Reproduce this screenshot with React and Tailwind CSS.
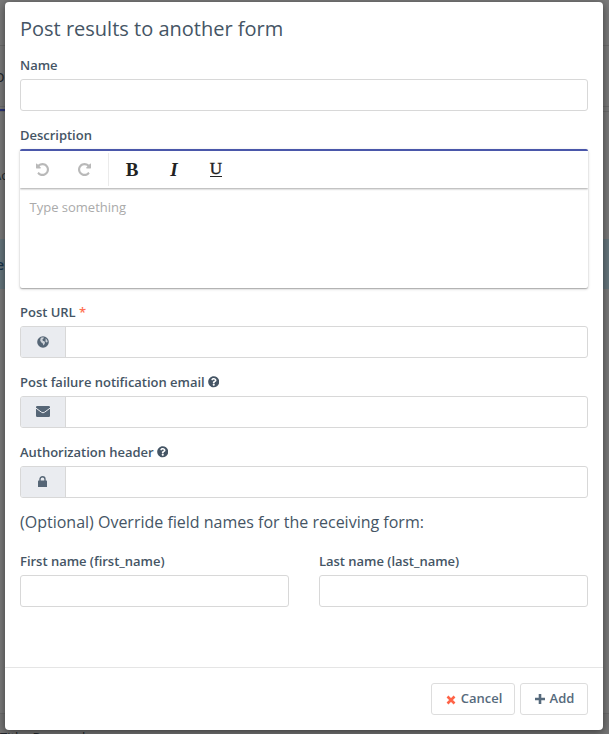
import React from "react";
import { FaQuestionCircle } from "react-icons/fa";

const UNDO =
  "M1536 896q0 156-61 298t-164 245-245 164-298 61q-172 0-327-72.5t-264-204.5q-7-10-6.5-22.5t8.5-20.5l137-138q10-9 25-9 16 2 23 12 73 95 179 147t225 52q104 0 198.5-40.5t163.5-109.5 109.5-163.5 40.5-198.5-40.5-198.5-109.5-163.5-163.5-109.5-198.5-40.5q-98 0-188 35.5t-160 101.5l137 138q31 30 14 69-17 40-59 40h-448q-26 0-45-19t-19-45v-448q0-42 40-59 39-17 69 14l130 129q107-101 244.5-156.5t284.5-55.5q156 0 298 61t245 164 164 245 61 298z";

function Undo({ className = "" }) {
  return (
    <svg viewBox="0 128 1536 1536" className={"size-[13px] " + className} fill="currentColor">
      <path d={UNDO} />
    </svg>
  );
}

function Globe() {
  return (
    <svg viewBox="0 0 12 12" className="mr-px mb-px size-[12px]">
      <circle cx="6" cy="6" r="5.8" fill="currentColor" />
      <path d="M4.4 1.6 6.8 1.3 6.4 2.8 5.2 3.8 6.2 5 7.4 5.2 8 6.4 7.6 8 6.4 9.4 5.8 7.6 4.4 6.4 3.2 4.8 3.4 2.8Z" fill="#eaecf0" opacity="0.8" />
      <path d="M8.6 2.2 10.2 4 10.7 6 9.6 6.6 8.4 5.4 8.6 4Z" fill="#eaecf0" opacity="0.8" />
    </svg>
  );
}

function Mail() {
  return (
    <svg viewBox="0 0 14 11" className="mr-px mb-px h-[11px] w-[14px]">
      <rect width="14" height="11" rx="1.2" fill="currentColor" />
      <path d="M0 2.2 5.6 6.3Q7 7.3 8.4 6.3L14 2.2" fill="none" stroke="#eaecf0" strokeWidth="1" />
    </svg>
  );
}

function Lock() {
  return (
    <svg viewBox="0 0 9 11" className="mr-px mb-[2px] h-[11px] w-[9px]">
      <rect y="4.6" width="9" height="6.4" rx="0.6" fill="currentColor" />
      <path d="M2 5V3.3a2.5 2.5 0 0 1 5 0V5" fill="none" stroke="currentColor" strokeWidth="1.4" />
    </svg>
  );
}

function Label({ children }) {
  return (
    <div className="flex h-5 items-center text-[13px] leading-5 font-semibold tracking-[-0.02px] whitespace-pre text-[#455565]">
      {children}
    </div>
  );
}

function Help() {
  return <FaQuestionCircle className="ml-[3px] size-[11.5px]" />;
}

function Field({ label, icon, className = "" }) {
  return (
    <div className={className}>
      <Label>{label}</Label>
      <div className="mt-1 flex h-8 overflow-hidden rounded-[3px] border border-[#d8d8d8] bg-white">
        {icon && (
          <div className="flex w-[45px] items-center justify-center border-r border-[#d8d8d8] bg-[#eaecf0] text-[#566676]">
            {icon}
          </div>
        )}
        <input className="min-w-0 flex-1 outline-none" />
      </div>
    </div>
  );
}

function Backdrop() {
  return (
    <div className="absolute inset-0 bg-[#7a7a7a] text-[#22272c]">
      <div className="h-[46px] border-b border-[#6c6c6c]" />
      <div className="flex h-[61px] items-center border-b border-[#6c6c6c]">
        <span className="-ml-[5px] text-[16px]">o</span>
      </div>
      <div className="mt-[2px] h-[2px] w-5 bg-[#2a3478]" />
      <div className="flex h-[128px] items-center border-t border-[#6c6c6c]">
        <span className="-ml-[7px] text-[13px]">Ac</span>
      </div>
      <div className="flex h-[50px] items-center bg-[#66767d] text-[#19344c]">
        <span className="-ml-[4px] text-[14px] font-semibold">e</span>
      </div>
      <div className="h-[424px]" />
      <div className="h-[21px] overflow-hidden border-t border-[#6c6c6c] bg-[#757575] pt-[13px] text-[13px] leading-5">
        Title: Personal
      </div>
    </div>
  );
}

export default function App() {
  return (
    <div className="relative h-[734px] w-[609px] overflow-hidden pt-[2px] pr-[6px] pl-[5px] font-['Open_Sans',sans-serif]">
      <Backdrop />
      <div className="relative flex h-[728px] flex-col rounded-[4px] bg-white shadow-[0_2px_8px_rgba(0,0,0,0.5)]">
        <div className="flex-1 px-[15px] pt-[11px]">
          <h1 className="h-8 text-[20px] leading-8 whitespace-nowrap text-[#455565]">Post results to another form</h1>
          <Field label="Name" className="mt-[10px]" />
          <div className="mt-[14px]">
            <Label>Description</Label>
            <div className="mt-1 h-[139px] rounded-[2px] border-t-2 border-[#4a57aa] bg-white shadow-[0_1px_3px_rgba(0,0,0,0.22),0_1px_1px_rgba(0,0,0,0.2)]">
              <div className="flex h-[37px] items-center shadow-[0_1px_2px_rgba(0,0,0,0.35)] [clip-path:inset(0_0_-4px_0)]">
                <div className="flex w-[88px] items-center gap-[29px] pl-4 text-[#b9b9b9]">
                  <Undo />
                  <Undo className="-scale-x-100" />
                </div>
                <div className="h-[33px] w-px bg-[#ebebeb]" />
                <div className="flex font-['Liberation_Serif',serif] text-[19px] leading-6 font-bold text-[#222]">
                  <span className="ml-[2px] w-[42px] text-center">B</span>
                  <span className="w-[42px] text-center italic">I</span>
                  <span className="flex w-[42px] justify-center text-[17px] font-normal">
                    <span className="mt-[4px] h-[15px] border-b border-[#222] leading-[14px] [-webkit-text-stroke:0.4px_#222]">U</span>
                  </span>
                </div>
              </div>
              <div className="px-[9.5px] pt-[9px] text-[13px] leading-5 text-[#aaa]">Type something</div>
            </div>
          </div>
          <Field
            className="mt-[14px]"
            label={<>Post URL <span className="text-[#ff7052]">*</span></>}
            icon={<Globe />}
          />
          <Field className="mt-[14px]" label={<>Post failure notification email<Help /></>} icon={<Mail />} />
          <Field className="mt-[14px]" label={<>Authorization header<Help /></>} icon={<Lock />} />
          <h2 className="mt-[12px] h-6 text-[16px] leading-6 whitespace-nowrap text-[#455565]">
            (Optional) Override field names for the receiving form:
          </h2>
          <div className="mt-[17px] grid grid-cols-2 gap-[30px]">
            <Field label="First name (first_name)" />
            <Field label="Last name (last_name)" />
          </div>
        </div>
        <div className="flex h-[63px] items-center justify-end gap-[5px] border-t border-[#e5e5e5] pr-[15px] text-[13px] font-semibold text-[#566a7c]">
          <button className="flex h-8 w-[84px] items-center justify-center gap-[5px] rounded-[3px] border border-[#ddd] bg-white pl-[2px]">
            <svg viewBox="0 0 10 10" className="mt-px size-[10px]">
              <path d="m1.5 1.5 7 7m0-7-7 7" stroke="#ff6347" strokeWidth="2.6" />
            </svg>
            Cancel
          </button>
          <button className="flex h-8 w-[68px] items-center justify-center gap-[5px] rounded-[3px] border border-[#ddd] bg-white pl-px">
            <svg viewBox="0 0 10 10" className="size-[10px]">
              <path d="M5 0v10M0 5h10" stroke="currentColor" strokeWidth="2.6" />
            </svg>
            Add
          </button>
        </div>
      </div>
    </div>
  );
}
